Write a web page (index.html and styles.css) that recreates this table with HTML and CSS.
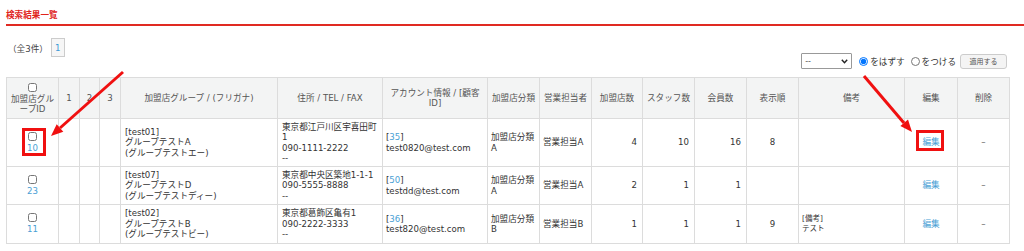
FILE: index.html
```html
<!DOCTYPE html>
<html lang="ja">
<head>
<meta charset="utf-8">
<link rel="stylesheet" href="styles.css">
</head>
<body>
<div class="page">
  <h2 class="title">検索結果一覧</h2>
  <div class="toolbar">
    <div class="pager">
      <span class="count">（全3件）</span>
      <span class="page-no">1</span>
    </div>
    <div class="controls">
      <div class="select-wrap">
        <select class="sel"><option>--</option></select>
        <svg class="chev" width="7" height="5" viewBox="0 0 7 5"><path d="M0.8 0.8 L3.5 3.8 L6.2 0.8" fill="none" stroke="#222" stroke-width="1.4"/></svg>
      </div>
      <label class="radio"><input type="radio" name="m" checked>をはずす</label>
      <label class="radio"><input type="radio" name="m">をつける</label>
      <button class="btn">適用する</button>
    </div>
  </div>
  <table class="grid">
    <colgroup>
      <col style="width:52px"><col style="width:21px"><col style="width:20px"><col style="width:21px">
      <col style="width:157px"><col style="width:105px"><col style="width:105px"><col style="width:52px">
      <col style="width:52px"><col style="width:51px"><col style="width:52px"><col style="width:52px">
      <col style="width:52px"><col style="width:106px"><col style="width:53px"><col style="width:52px">
    </colgroup>
    <thead>
      <tr>
        <th class="idh"><input type="checkbox" class="cb"><span class="idtxt">加盟店グループID</span></th>
        <th>1</th><th>2</th><th>3</th>
        <th>加盟店グループ / (フリガナ)</th>
        <th>住所 / TEL / FAX</th>
        <th>アカウント情報 / [顧客ID]</th>
        <th>加盟店分類</th>
        <th>営業担当者</th>
        <th>加盟店数</th>
        <th>スタッフ数</th>
        <th>会員数</th>
        <th>表示順</th>
        <th>備考</th>
        <th>編集</th>
        <th>削除</th>
      </tr>
    </thead>
    <tbody>
      <tr class="r1">
        <td class="c"><input type="checkbox" class="cb"><a class="lk">10</a></td>
        <td></td><td></td><td></td>
        <td class="nm">[test01]<br>グループテストA<br>(グループテストエー)</td>
        <td class="ad">東京都江戸川区宇喜田町1<br>090-1111-2222<br>--</td>
        <td>[<a class="lk">35</a>]<br>test0820@test.com</td>
        <td>加盟店分類<br>A</td>
        <td>営業担当A</td>
        <td class="r">4</td>
        <td class="r">10</td>
        <td class="r">16</td>
        <td class="c">8</td>
        <td></td>
        <td class="c"><a class="lk">編集</a></td>
        <td class="c dash">–</td>
      </tr>
      <tr class="r2">
        <td class="c"><input type="checkbox" class="cb"><a class="lk">23</a></td>
        <td></td><td></td><td></td>
        <td class="nm">[test07]<br>グループテストD<br>(グループテストディー)</td>
        <td class="ad">東京都中央区築地1-1-1<br>090-5555-8888<br>--</td>
        <td>[<a class="lk">50</a>]<br>testdd@test.com</td>
        <td>加盟店分類<br>A</td>
        <td>営業担当A</td>
        <td class="r">2</td>
        <td class="r">1</td>
        <td class="r">1</td>
        <td class="c"></td>
        <td></td>
        <td class="c"><a class="lk">編集</a></td>
        <td class="c dash">–</td>
      </tr>
      <tr class="r3">
        <td class="c"><input type="checkbox" class="cb"><a class="lk">11</a></td>
        <td></td><td></td><td></td>
        <td class="nm">[test02]<br>グループテストB<br>(グループテストビー)</td>
        <td class="ad">東京都葛飾区亀有1<br>090-2222-3333<br>--</td>
        <td>[<a class="lk">36</a>]<br>test820@test.com</td>
        <td>加盟店分類<br>B</td>
        <td>営業担当B</td>
        <td class="r">1</td>
        <td class="r">1</td>
        <td class="r">1</td>
        <td class="c">9</td>
        <td class="note">[備考]<br>テスト</td>
        <td class="c"><a class="lk">編集</a></td>
        <td class="c dash">–</td>
      </tr>
    </tbody>
  </table>
  <svg class="annot" width="1024" height="251" viewBox="0 0 1024 251">
    <g stroke="#f01010" fill="none" stroke-width="3">
      <line x1="123" y1="72" x2="60" y2="128"/>
      <line x1="864" y1="76" x2="904" y2="123"/>
      <rect x="23.5" y="129.5" width="21" height="25"/>
      <rect x="917.5" y="131.5" width="25" height="18"/>
    </g>
    <g fill="#f01010">
      <polygon points="51,136 63.3,131.7 56.7,124.3"/>
      <polygon points="912,132 908,119.6 900.4,126.1"/>
    </g>
  </svg>
</div>
</body>
</html>
```

FILE: styles.css
```css
* { box-sizing: border-box; }
html, body { margin: 0; padding: 0; background: #fff; }
body {
  font-family: "DejaVu Sans", "Noto Sans CJK JP", sans-serif;
  font-size: 8.6px;
  color: #333;
  width: 1024px;
  height: 251px;
  overflow: hidden;
}
.page {
  position: relative;
  padding: 0 0 0 6px;
}
.title {
  margin: 0;
  padding: 9px 0 4px 0;
  font-family: "Noto Sans CJK JP", sans-serif;
  font-size: 8.6px;
  line-height: 11px;
  font-weight: bold;
  color: #e0241c;
  border-bottom: 2px solid #e02a22;
}
.toolbar {
  display: flex;
  justify-content: space-between;
  margin-top: 12px;
  margin-bottom: 8px;
  height: 31px;
}
.pager {
  display: flex;
  align-items: center;
  align-self: flex-start;
  height: 19px;
}
.count { color: #444; margin-left: 2px; }
.page-no {
  margin-left: 3px;
  width: 14px;
  height: 19px;
  border: 1px solid #ccc;
  background: #f6f6f6;
  color: #3d9bd6;
  display: flex;
  align-items: center;
  justify-content: center;
}
.controls {
  align-self: flex-end;
  display: flex;
  align-items: center;
  margin-right: 17px;
  height: 16px;
}
.select-wrap { position: relative; width: 51px; height: 16px; }
.sel {
  appearance: none;
  -webkit-appearance: none;
  width: 51px;
  height: 16px;
  border: 1px solid #999;
  border-radius: 1px;
  background: #fff;
  font: 8px "DejaVu Sans", sans-serif;
  color: #555;
  padding: 0 0 0 3px;
  margin: 0;
}
.chev { position: absolute; right: 4px; top: 6px; }
.radio {
  display: flex;
  align-items: center;
  margin-left: 7px;
  font-size: 8.6px;
  color: #333;
}
.radio input {
  width: 9px;
  height: 9px;
  margin: 0 2px 0 0;
}
.radio + .radio { margin-left: 6px; }
.btn {
  margin-left: 4px;
  width: 47px;
  height: 15px;
  padding: 0;
  font: 7px "Noto Sans CJK JP", sans-serif;
  color: #555;
  background: #f4f4f4;
  border: 1px solid #ccc;
  border-radius: 3px;
}
.grid {
  border-collapse: collapse;
  table-layout: fixed;
  width: 1004px;
}
.grid th, .grid td {
  border: 1px solid #dcdcdc;
  padding: 2px 3px;
  line-height: 10.5px;
  font-weight: normal;
  vertical-align: middle;
}
.grid th {
  background: #f3f4f4;
  color: #555;
  text-align: center;
  height: 41px;
  line-height: 10px;
}
.grid th.idh { padding: 2px 1px; }
.idtxt { display: block; }
.grid td { text-align: left; }
.grid td.nm, .grid td.ad { padding-left: 4px; }
.grid td.c { text-align: center; }
.grid td.r { text-align: right; padding-right: 5px; }
.r1 td { height: 48px; }
.r2 td { height: 38px; }
.r3 td { height: 39px; }
.cb {
  display: block;
  width: 9px;
  height: 9px;
  margin: 0 auto 2px;
}
.lk { color: #4a9fd5; text-decoration: none; }
.dash { color: #666; }
.note { font-size: 7.5px; line-height: 10px; }
.annot {
  position: absolute;
  left: 0;
  top: 0;
  pointer-events: none;
}
```
